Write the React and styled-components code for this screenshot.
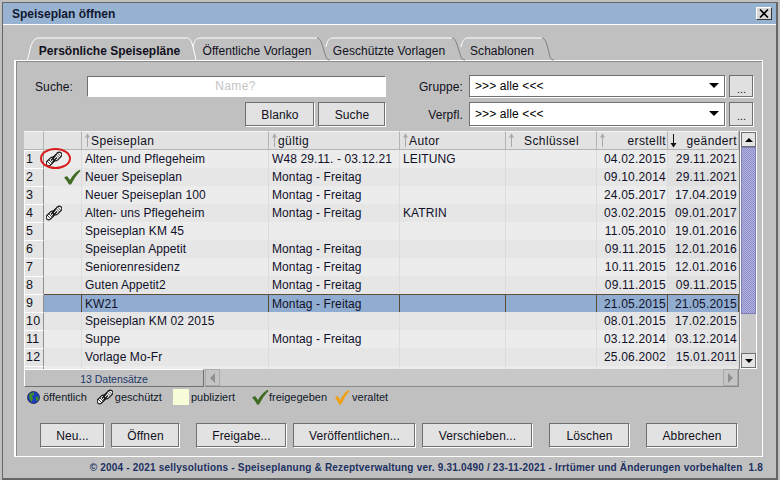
import React from "react";
import styled, { createGlobalStyle } from "styled-components";

const Global = createGlobalStyle`
  html, body { margin: 0; padding: 0; background: #c0c0c0; }
  * { box-sizing: border-box; }
  body { font-family: "Liberation Sans", Arial, sans-serif; font-size: 12px; color: #101020; }
`;

const Frame = styled.div`
  width: 780px; height: 480px; background: #c0c0c0; overflow: hidden;
  padding: 2px; display: flex; flex-direction: column;
`;
const Win = styled.div`
  flex: 1; display: flex; flex-direction: column;
  border-top: 1px solid #666; border-left: 1px solid #666; border-right: 2px solid #666;
  box-shadow: 0 2px 0 #666;
  min-height: 0;
`;
const TitleBar = styled.div`
  height: 22px; background: #98b3d2; border-bottom: 1px solid #fff; display: flex; align-items: center;
  justify-content: space-between; padding: 0 4px 0 9px; font-weight: bold; color: #101830;
  flex: none;
`;
const CloseBtn = styled.div`
  width: 16px; height: 13px; background: #d8d8d8; border: 1px solid; border-color: #fff #333 #333 #fff;
  display: flex; align-items: center; justify-content: center;
`;
const Body = styled.div`
  flex: 1; display: flex; flex-direction: column; padding: 12px 0 0 11px; min-height: 0;
`;
const TabRow = styled.div`
  height: 24px; display: flex; padding-left: 10px; flex: none; position: relative; z-index: 1; margin-bottom: -1px;
`;
const TabItem = styled.div`
  position: relative; width: ${p => p.$w}px; height: 24px; margin-right: ${p => p.$gap}px;
  display: flex; align-items: center; justify-content: center; padding: 3px ${p => p.$pr}px 0 0;
  font-weight: ${p => (p.$active ? "bold" : "normal")}; letter-spacing: ${p => (p.$active ? "0" : "0.05px")};
  font-size: 12px; color: #101020;
  & > svg { position: absolute; left: 0; top: 0; }
  & > span { position: relative; }
`;
const Panel = styled.div`
  height: 397px; border: 1px solid #fff; border-left: 2px solid #fff;
  box-shadow: inset 1px 1px 0 #8a8a8a; padding: 14px 8px 0 8px; display: flex; flex-direction: column; flex: none;
  width: 749px;
`;
const FilterGrid = styled.div`
  display: grid; grid-template-columns: 62px 299px 83px 257px 3px 25px; grid-template-rows: 23px 25px;
  row-gap: 4px; align-items: center; flex: none; margin-left: 1px;
`;
const Label = styled.div`
  text-align: ${p => p.$align || "right"}; padding-right: ${p => (p.$align ? 0 : 6)}px; padding-left: ${p => (p.$align ? 10 : 0)}px;
  letter-spacing: 0.1px;
`;
const SearchInput = styled.div`
  height: 21px; background: #fff; border: 1px solid; border-color: #707070 #fff #fff #707070; color: #c4c4c4;
  text-align: center; line-height: 19px; letter-spacing: 0.4px; padding-right: 2px;
`;
const Select = styled.div`
  height: ${p => p.$h}px; background: #fff; border: 1px solid; border-color: #707070 #fff #fff #707070; box-shadow: inset -1px -1px 0 #707070;
  display: flex; align-items: center; justify-content: space-between; padding: 0 6px 2px 5px; letter-spacing: 0.1px; font-size: 12px; color: #000;
`;
const Arrow = styled.div`
  width: 0; height: 0; border-left: ${p => p.$s || 5}px solid transparent; border-right: ${p => p.$s || 5}px solid transparent;
  ${p => (p.$up ? `border-bottom: ${p.$s || 5}px solid #000;` : `border-top: ${p.$s || 5}px solid #000;`)}
`;
const DotsBtn = styled.div`
  height: ${p => p.$h}px; background: #e0e0e0; border: 1px solid; border-color: #707070 #fff #fff #707070; box-shadow: inset -1px -1px 0 #707070;
  text-align: center; line-height: 26px; font-size: 11px;
`;
const BtnPair = styled.div`
  grid-column: 2; display: flex; justify-content: flex-end; gap: 3px;
`;
const Btn = styled.div`
  width: ${p => p.$w}px; height: 25px; background: #e2e2e2; border: 1px solid; border-color: #707070 #fff #fff #707070;
  box-shadow: inset -1px -1px 0 #707070; display: flex; align-items: center; justify-content: center; letter-spacing: 0.1px;
  color: #101020; flex: none;
`;
const TableWrap = styled.div`
  display: flex; height: 238px; margin-top: 4px; flex: none;
`;
const TableBody = styled.div`
  width: 715px; overflow: hidden; background: #c4c4c4; position: relative; flex: none;
`;
const Row = styled.div`
  display: grid; grid-template-columns: 20px 38px 187px 131px 106px 91px 71px 71px; height: 18px; flex: none;
`;
const HeadRow = styled(Row)`
  height: 19px;
`;
const HeadCell = styled.div`
  background: #e2e2e2; border-right: 1px solid #b4b4b4; border-bottom: 1px solid #b4b4b4; border-top: 1px solid #f4f4f4;
  height: 19px; display: flex; align-items: center; padding: 0 1px 0 2px; letter-spacing: 0.4px; position: relative;
  justify-content: ${p => p.$j || "flex-start"};
`;
const HeadLabel = styled.span`
  margin-left: 7px;
`;
const HeadArrow = styled.svg`
  position: absolute; left: 2px; top: 1px;
`;
const NumCell = styled.div`
  background: #e4e4e4; border: 1px solid; border-color: #fff #909090 #909090 #fff; font-size: 12.5px; padding-left: 1px; line-height: 17px;
  letter-spacing: 0.2px;
`;
const Cell = styled.div`
  background: ${p => p.$sel ? "#90acd0" : p.$dark ? (p.$alt ? "#e0e0e0" : "#e6e6e6") : p.$alt ? "#e6e6e6" : "#ececec"};
  border-right: 1px solid ${p => (p.$sel ? "#5c4c38" : "#dcdcdc")};
  ${p => p.$sel ? "border-top: 1px solid #5c4c38; border-bottom: 1px solid #5c4c38;" : "border-bottom: 1px solid #f2f2f2;"}
  padding: 0 3px; white-space: nowrap; overflow: hidden; letter-spacing: ${p => (p.$right ? 0.2 : 0.1)}px; color: #101028;
  display: flex; align-items: center;
  justify-content: ${p => (p.$right ? "flex-end" : "flex-start")};
  ${p => (p.$right ? "padding: 0 1px 0 0;" : "")}
`;
const IconCell = styled(Cell)`
  padding: 0 0 0 2px;
  justify-content: ${p => (p.$end ? "flex-end" : "flex-start")};
  overflow: visible;
`;
const RedCircle = styled.div`
  position: absolute; left: 16px; top: 17px; width: 31px; height: 21px; border: 2px solid #d81c1c; border-radius: 50%;
`;
const VScroll = styled.div`
  width: 18px; background: #fff; padding: 1px; display: flex; flex-direction: column; flex: none; height: 238px;
  border-left: 1px solid #808080;
`;
const ScrollBtn = styled.div`
  height: 15px; background: #e4e4e4; border: 1px solid #707070; display: flex; align-items: center; justify-content: center; flex: none;
`;
const Thumb = styled.div`
  height: 167px; flex: none; border: 1px solid #8080b8;
  background: repeating-conic-gradient(#b4b4de 0 25%, #8c8cc8 0 50%) 0 0 / 2px 2px;
`;
const Track = styled.div`
  flex: 1; background: #c8c8c8;
`;
const BottomBar = styled.div`
  display: flex; height: 18px; flex: none; width: 715px;
`;
const Status = styled.div`
  width: 180px; background: #c0c0c0; border-bottom: 1px solid #707070; border-right: 1px solid #707070; border-top: 1px solid #fff; border-left: 1px solid #fff;
  font-size: 10.5px; color: #1c3868; text-align: center; line-height: 18px; letter-spacing: 0;
`;
const HTrack = styled.div`
  flex: 1; display: flex; margin-left: 1px; background: #c8c8c8; border-right: 1px solid #888; border-bottom: 1px solid #888;
`;
const HBtn = styled.div`
  width: 15px; background: #c4c4c4; border: 1px solid #aaa; display: flex; align-items: center; justify-content: center;
`;
const HFill = styled.div`flex: 1;`;
const Tri = styled.div`
  width: 0; height: 0; border-top: 5px solid transparent; border-bottom: 5px solid transparent;
  ${p => (p.$left ? "border-right: 5px solid #909090;" : "border-left: 5px solid #909090;")}
`;
const Legend = styled.div`
  display: flex; align-items: center; height: 18px; margin-top: 1px; font-size: 11px; flex: none; color: #101828;
`;
const LegendItem = styled.div`
  display: flex; align-items: center; margin-left: ${p => p.$ml}px; gap: ${p => p.$gap}px;
`;
const Swatch = styled.div`
  width: 16px; height: 16px; background: #f8fcd8;
`;
const Actions = styled.div`
  display: flex; margin-top: 17px; padding-left: 16px; flex: none;
`;
const ActBtn = styled(Btn)`
  margin-left: ${p => p.$ml}px;
`;
const Footer = styled.div`
  height: 21px; display: flex; align-items: center; justify-content: flex-end; padding-right: 13px; font-size: 10px; font-weight: bold; color: #1c3060;
  letter-spacing: 0.2px; white-space: pre; flex: none; width: 762px;
`;

const Chain = () => (
  <svg width="16" height="16" viewBox="0 0 16 16" fill="none">
    <g stroke="#111" strokeWidth="1.1">
      <rect x="-0.5" y="8" width="10" height="5" rx="2.5" transform="rotate(-45 4.5 10.5)" fill="#fff" />
      <rect x="6.5" y="3" width="10" height="5" rx="2.5" transform="rotate(-45 11.5 5.5)" fill="#fff" />
      <path d="M5 9.5 L9.5 4.5 M6.5 11 L11 6.5" strokeWidth="1.4" />
      <path d="M1.5 10.5 L5 14 M3 9 L6.5 12.5 M9.5 3 L13 6.5 M11 1.5 L14.5 5" strokeWidth="0.8" />
    </g>
  </svg>
);
const Check = ({ color = "#3f6b22", w = 18 }) => (
  <svg width={w} height="16" viewBox="0 0 18 16" preserveAspectRatio="none">
    <path d="M1 8.5 L4 7 L7 11 Q10.5 4.5 16.5 0.8 L17.5 1.8 Q12 7.5 8 15.5 L6 15.5 Q3.5 11 1 8.5 Z" fill={color} />
  </svg>
);
const Globe = () => (
  <svg width="13" height="13" viewBox="0 0 13 13">
    <circle cx="6.5" cy="6.5" r="6" fill="#1c3cc0" stroke="#202040" strokeWidth="0.8" />
    <path d="M2 3.5 Q4 1 7 1.5 L7 4 L5 5 L6 8 L4.5 11 Q2.5 9 2.2 7 Z" fill="#3c8c2c" />
    <path d="M8.5 6 L11.5 5.5 L11.5 8.5 L9.5 10.5 Z" fill="#3c8c2c" />
  </svg>
);
const SortArrow = ({ dark }) => (
  <HeadArrow width="7" height="15" viewBox="0 0 7 15">
    <path d="M3.5 1 V14" stroke={dark ? "#111" : "#a8a8a8"} strokeWidth="1" />
    <path d={dark ? "M0.5 10 H6.5 L3.5 14.5 Z" : "M1 4.5 H6 L3.5 0.5 Z"} fill={dark ? "#111" : "#a8a8a8"} />
  </HeadArrow>
);

const tabs = [
  { t: "Persönliche Speisepläne", w: 173, gap: -5, pr: 2, active: true, d: "M3 23 C6 20 5 2 14 1 H163 C167 1 168 5 172 23", rd: "" },
  { t: "Öffentliche Vorlagen", w: 138, gap: -5, pr: 8, d: "M1 10 C2 4 4 1 8 1 H125", rd: "M125 1 C129 1 130 8 134 20 Q135 23 138 23" },
  { t: "Geschützte Vorlagen", w: 140, gap: -5, pr: 12, d: "M1 10 C2 4 4 1 8 1 H127", rd: "M127 1 C131 1 132 8 136 20 Q137 23 140 23" },
  { t: "Schablonen", w: 94, gap: 0, pr: 10, d: "M1 10 C2 4 4 1 8 1 H82", rd: "M82 1 C86 1 87 8 90 20 Q91 23 94 23" },
];
const rows = [
  ["1", "c", "Alten- und Pflegeheim", "W48 29.11. - 03.12.21", "LEITUNG", "", "04.02.2015", "29.11.2021"],
  ["2", "k", "Neuer Speiseplan", "Montag - Freitag", "", "", "09.10.2014", "29.11.2021"],
  ["3", "", "Neuer Speiseplan 100", "Montag - Freitag", "", "", "24.05.2017", "17.04.2019"],
  ["4", "c", "Alten- uns Pflegeheim", "Montag - Freitag", "KATRIN", "", "03.02.2015", "09.01.2017"],
  ["5", "", "Speiseplan KM 45", "", "", "", "11.05.2010", "19.01.2016"],
  ["6", "", "Speiseplan Appetit", "Montag - Freitag", "", "", "09.11.2015", "12.01.2016"],
  ["7", "", "Seniorenresidenz", "Montag - Freitag", "", "", "10.11.2015", "12.01.2016"],
  ["8", "", "Guten Appetit2", "Montag - Freitag", "", "", "09.11.2015", "09.11.2015"],
  ["9", "", "KW21", "Montag - Freitag", "", "", "21.05.2015", "21.05.2015"],
  ["10", "", "Speiseplan KM 02 2015", "", "", "", "08.01.2015", "17.02.2015"],
  ["11", "", "Suppe", "Montag - Freitag", "", "", "03.12.2014", "03.12.2014"],
  ["12", "", "Vorlage Mo-Fr", "", "", "", "25.06.2002", "15.01.2011"],
  ["", "", "", "", "", "", "", ""],
];

export default function App() {
  return (
    <Frame>
      <Global />
      <Win>
        <TitleBar>
          Speiseplan öffnen
          <CloseBtn>
            <svg width="10" height="9" viewBox="0 0 10 9"><path d="M1 0.5 L9 8.5 M9 0.5 L1 8.5" stroke="#000" strokeWidth="1.6" /></svg>
          </CloseBtn>
        </TitleBar>
        <Body>
          <TabRow>
            {tabs.map((t) => (
              <TabItem key={t.t} $w={t.w} $gap={t.gap} $pr={t.pr} $active={t.active}>
                <svg width={t.w} height="24" viewBox={`0 0 ${t.w} 24`} fill="none">
                  <path d={t.d} stroke="#fff" strokeWidth="1" />
                  {t.rd && <path d={t.rd} stroke="#808080" strokeWidth="1" />}
                </svg>
                <span>{t.t}</span>
              </TabItem>
            ))}
          </TabRow>
          <Panel>
            <FilterGrid>
              <Label $align="left">Suche:</Label>
              <SearchInput>Name?</SearchInput>
              <Label>Gruppe:</Label>
              <Select $h={23}>&gt;&gt;&gt; alle &lt;&lt;&lt;<Arrow /></Select>
              <span />
              <DotsBtn $h={23}>...</DotsBtn>
              <span />
              <BtnPair><Btn $w={70}>Blanko</Btn><Btn $w={68}>Suche</Btn></BtnPair>
              <Label>Verpfl.</Label>
              <Select $h={25}>&gt;&gt;&gt; alle &lt;&lt;&lt;<Arrow /></Select>
              <span />
              <DotsBtn $h={25}>...</DotsBtn>
            </FilterGrid>
            <TableWrap>
              <TableBody>
                <HeadRow>
                  <HeadCell />
                  <HeadCell />
                  <HeadCell><SortArrow /><HeadLabel>Speiseplan</HeadLabel></HeadCell>
                  <HeadCell><SortArrow /><HeadLabel>gültig</HeadLabel></HeadCell>
                  <HeadCell><SortArrow /><HeadLabel>Autor</HeadLabel></HeadCell>
                  <HeadCell $j="center"><SortArrow />Schlüssel</HeadCell>
                  <HeadCell $j="flex-end"><SortArrow />erstellt</HeadCell>
                  <HeadCell $j="flex-end"><SortArrow dark />geändert</HeadCell>
                </HeadRow>
                {rows.map((r, i) => {
                  const sel = r[0] === "9";
                  const alt = i % 2 === 1;
                  return (
                    <Row key={i}>
                      <NumCell>{r[0]}</NumCell>
                      <IconCell $sel={sel} $alt={alt} $end={r[1] === "k"}>
                        {r[1] === "c" && <Chain />}
                        {r[1] === "k" && <Check />}
                      </IconCell>
                      <Cell $sel={sel} $alt={alt}>{r[2]}</Cell>
                      <Cell $sel={sel} $alt={alt}>{r[3]}</Cell>
                      <Cell $sel={sel} $alt={alt}>{r[4]}</Cell>
                      <Cell $sel={sel} $alt={alt}>{r[5]}</Cell>
                      <Cell $sel={sel} $alt={alt} $right>{r[6]}</Cell>
                      <Cell $sel={sel} $alt={alt} $dark $right>{r[7]}</Cell>
                    </Row>
                  );
                })}
                <RedCircle />
              </TableBody>
              <VScroll>
                <ScrollBtn><Arrow $up $s={4} /></ScrollBtn>
                <Thumb />
                <Track />
                <ScrollBtn><Arrow $s={4} /></ScrollBtn>
              </VScroll>
            </TableWrap>
            <BottomBar>
              <Status>13 Datensätze</Status>
              <HTrack>
                <HBtn><Tri $left /></HBtn>
                <HFill />
                <HBtn><Tri /></HBtn>
              </HTrack>
            </BottomBar>
            <Legend>
              <LegendItem $ml={3} $gap={3}><Globe />öffentlich</LegendItem>
              <LegendItem $ml={10} $gap={2}><Chain />geschützt</LegendItem>
              <LegendItem $ml={11} $gap={2}><Swatch />publiziert</LegendItem>
              <LegendItem $ml={16} $gap={0}><Check />freigegeben</LegendItem>
              <LegendItem $ml={7} $gap={2}><Check color="#f0a010" w={16} />veraltet</LegendItem>
            </Legend>
            <Actions>
              <ActBtn $w={65} $ml={0}>Neu...</ActBtn>
              <ActBtn $w={69} $ml={6}>Öffnen</ActBtn>
              <ActBtn $w={91} $ml={16}>Freigabe...</ActBtn>
              <ActBtn $w={123} $ml={6}>Veröffentlichen...</ActBtn>
              <ActBtn $w={111} $ml={6}>Verschieben...</ActBtn>
              <ActBtn $w={81} $ml={16}>Löschen</ActBtn>
              <ActBtn $w={92} $ml={16}>Abbrechen</ActBtn>
            </Actions>
          </Panel>
          <Footer>© 2004 - 2021 sellysolutions - Speiseplanung &amp; Rezeptverwaltung ver. 9.31.0490 / 23-11-2021 - Irrtümer und Änderungen vorbehalten  1.8</Footer>
        </Body>
      </Win>
    </Frame>
  );
}
